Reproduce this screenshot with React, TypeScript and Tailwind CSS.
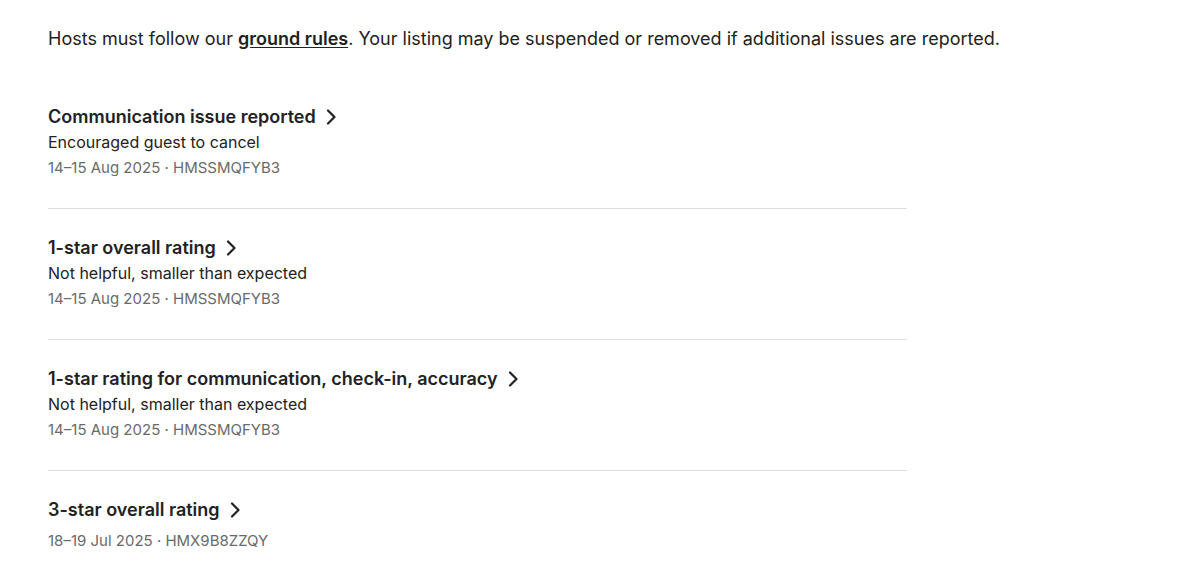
type Issue = {
  title: string;
  detail?: string;
  meta: string;
};

const issues: Issue[] = [
  {
    title: "Communication issue reported",
    detail: "Encouraged guest to cancel",
    meta: "14–15 Aug 2025 · HMSSMQFYB3",
  },
  {
    title: "1-star overall rating",
    detail: "Not helpful, smaller than expected",
    meta: "14–15 Aug 2025 · HMSSMQFYB3",
  },
  {
    title: "1-star rating for communication, check-in, accuracy",
    detail: "Not helpful, smaller than expected",
    meta: "14–15 Aug 2025 · HMSSMQFYB3",
  },
  {
    title: "3-star overall rating",
    meta: "18–19 Jul 2025 · HMX9B8ZZQY",
  },
];

function Chevron() {
  return (
    <svg width="12" height="16" viewBox="0 0 12 16" fill="none" className="shrink-0">
      <polyline
        points="3,1.5 9.5,8 3,14.5"
        stroke="#222222"
        strokeWidth="2.2"
        strokeLinecap="round"
        strokeLinejoin="round"
      />
    </svg>
  );
}

export default function App() {
  return (
    <div
      className="min-h-screen bg-white px-12 pt-[25px] text-[#222222]"
      style={{ fontFamily: "Inter, 'Noto Sans', sans-serif" }}
    >
      <p className="text-[18px] leading-7">
        Hosts must follow our{" "}
        <a href="#" className="font-semibold underline underline-offset-2">
          ground rules
        </a>
        . Your listing may be suspended or removed if additional issues are reported.
      </p>

      <div className="mt-[51px] w-[859px]">
        {issues.map((issue, i) => (
          <div
            key={issue.title}
            className={
              i === 0
                ? "pb-[28px]"
                : "border-t border-[#dddddd] pt-[26px] pb-[28px]"
            }
          >
            <a
              href="#"
              className="flex items-center gap-[9px] text-[18px] font-semibold leading-[26px]"
            >
              {issue.title}
              <Chevron />
            </a>
            {issue.detail && (
              <p className="text-[16px] leading-[25px]">{issue.detail}</p>
            )}
            <p
              className={
                issue.detail
                  ? "text-[15px] leading-[25px] text-[#6a6a6a]"
                  : "mt-[5px] text-[15px] leading-[25px] text-[#6a6a6a]"
              }
            >
              {issue.meta}
            </p>
          </div>
        ))}
      </div>
    </div>
  );
}
